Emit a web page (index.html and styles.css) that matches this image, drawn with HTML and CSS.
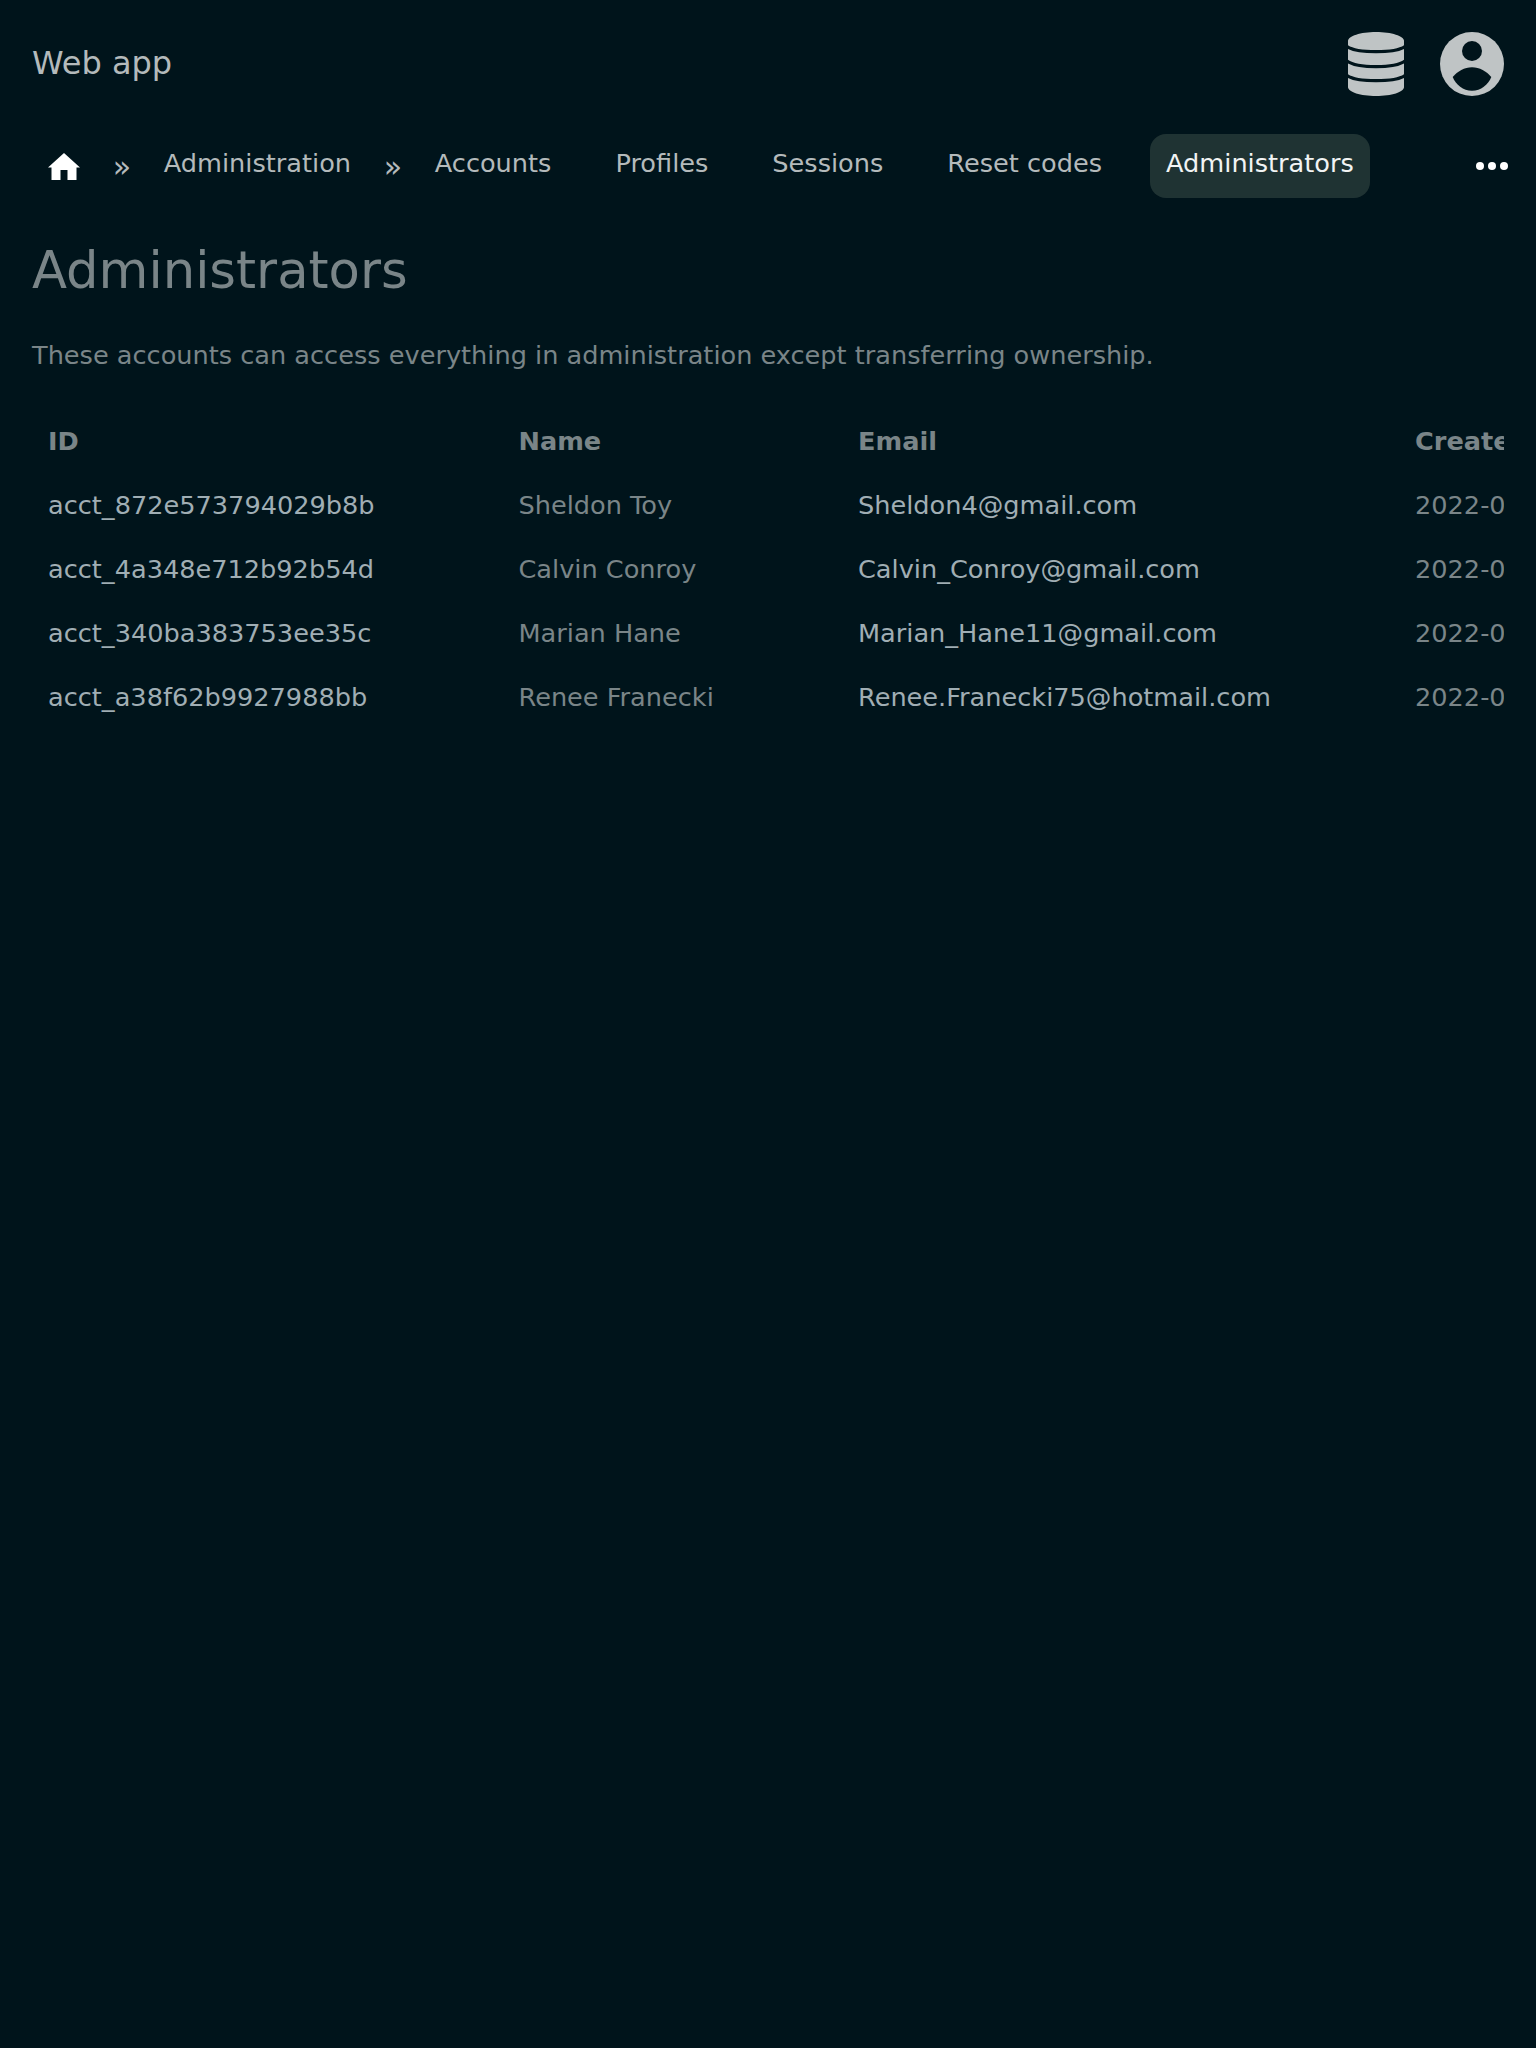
FILE: index.html
```html
<!DOCTYPE html>
<html lang="en">
<head>
  <meta charset="UTF-8" />
  <meta name="viewport" content="width=device-width, initial-scale=1.0" />
  <title>Administrators</title>
  <link rel="stylesheet" href="styles.css">
</head>
<body>
  <header class="topbar">
    <a class="brand" href="#">Web app</a>
    <div class="topbar-icons">
      <svg class="icon-db" viewBox="0 0 56 64" width="56" height="64" aria-hidden="true">
        <path d="M0 9C0 4 12.500 0 28 0s28 4 28 9v46c0 5-12.500 9-28 9S0 60 0 55z"/>
        <path class="db-line" d="M-1 14.500C4 18 16 19.700 28 19.700S52 18 57 14.500"/>
        <path class="db-line" d="M-1 29C4 32.800 16 34.700 28 34.700S52 32.800 57 29"/>
        <path class="db-line" d="M-1 43.500C4 47 16 48.700 28 48.700S52 47 57 43.500"/>
      </svg>
      <svg class="icon-user" viewBox="0 0 64 64" width="64" height="64" aria-hidden="true">
        <circle cx="32" cy="32" r="32"/>
        <circle class="user-cut" cx="32" cy="19" r="10"/>
        <path class="user-cut" d="M12.700 45C17.500 39.500 24.500 35.300 32 35.300S46.500 39.500 51.300 45C48 53 41 58.700 32 58.700S16 53 12.700 45z"/>
      </svg>
    </div>
  </header>

  <nav class="crumbs">
    <a class="crumb-home" href="#" aria-label="Home">
      <svg viewBox="0 0 32 27" width="32" height="27" aria-hidden="true">
        <path d="M16 0 0 14.500h3.500V27h9v-10h7v10h9V14.500H32z"/>
      </svg>
    </a>
    <span class="sep">»</span>
    <a class="crumb" href="#">Administration</a>
    <span class="sep">»</span>
    <div class="crumb-group">
      <a class="crumb" href="#">Accounts</a>
      <a class="crumb" href="#">Profiles</a>
      <a class="crumb" href="#">Sessions</a>
      <a class="crumb" href="#">Reset codes</a>
      <a class="crumb active" href="#">Administrators</a>
    </div>
    <a class="more" href="#" aria-label="More"><i></i><i></i><i></i></a>
  </nav>

  <main class="content">
    <h1>Administrators</h1>
    <p class="lead">These accounts can access everything in administration except transferring ownership.</p>

    <div class="table-wrap">
      <table>
        <thead>
          <tr>
            <th class="col-id">ID</th>
            <th class="col-name">Name</th>
            <th class="col-email">Email</th>
            <th>Created</th>
          </tr>
        </thead>
        <tbody>
          <tr>
            <td class="mono">acct_872e573794029b8b</td>
            <td>Sheldon Toy</td>
            <td class="mail">Sheldon4@gmail.com</td>
            <td>2022-04-12</td>
          </tr>
          <tr>
            <td class="mono">acct_4a348e712b92b54d</td>
            <td>Calvin Conroy</td>
            <td class="mail">Calvin_Conroy@gmail.com</td>
            <td>2022-06-03</td>
          </tr>
          <tr>
            <td class="mono">acct_340ba383753ee35c</td>
            <td>Marian Hane</td>
            <td class="mail">Marian_Hane11@gmail.com</td>
            <td>2022-08-21</td>
          </tr>
          <tr>
            <td class="mono">acct_a38f62b9927988bb</td>
            <td>Renee Franecki</td>
            <td class="mail">Renee.Franecki75@hotmail.com</td>
            <td>2022-09-17</td>
          </tr>
        </tbody>
      </table>
    </div>
  </main>
</body>
</html>
```

FILE: styles.css
```css
html {
  background-color: #00141b;
}
body {
  margin: 0;
  padding: 32px;
  min-height: 1984px;
  font-family: 'DejaVu Sans', sans-serif;
  font-size: 25.6px;
  color: #b4babb;
  background-color: #00141b;
}
a {
  color: inherit;
  text-decoration: none;
}

.topbar {
  display: flex;
  align-items: center;
  justify-content: space-between;
  height: 64px;
}
.brand {
  font-size: 32px;
  padding-bottom: 2px;
}
.topbar-icons {
  display: flex;
  gap: 36px;
}
.topbar-icons svg {
  display: block;
  fill: #bfc4c5;
  overflow: hidden;
}
.db-line {
  fill: none;
  stroke: #00141b;
  stroke-width: 3.2;
}
.topbar-icons .user-cut {
  fill: #00141b;
}

.crumbs {
  display: flex;
  align-items: center;
  height: 64px;
  margin-top: 38px;
}
.crumb-group {
  display: flex;
  gap: 32px;
}
.crumb {
  display: flex;
  align-items: center;
  box-sizing: border-box;
  height: 64px;
  padding: 0 16px 6px;
  border-radius: 16px;
}
.crumb.active {
  background-color: #1f3333;
  color: #f2f4f4;
}
.crumb-home {
  padding: 0 16px;
}
.crumb-home svg {
  display: block;
  fill: #ffffff;
}
.sep {
  margin: 0 16.700px;
  font-size: 30px;
}
.more {
  display: flex;
  gap: 4px;
  margin-left: auto;
  margin-right: -4px;
}
.more i {
  width: 8px;
  height: 8px;
  border-radius: 50%;
  background-color: #ffffff;
}

h1 {
  margin: 42px 0 0;
  font-size: 51.2px;
  font-weight: 400;
  line-height: 1.2;
  color: #7a8588;
}
.lead {
  margin: 35px 0 0;
  color: #7a8588;
  line-height: 1.5;
}

.table-wrap {
  margin-top: 34px;
  overflow: hidden;
}
table {
  border-collapse: collapse;
  table-layout: fixed;
  width: 1700px;
}
th, td {
  padding: 16px;
  height: 64px;
  box-sizing: border-box;
  text-align: left;
  white-space: nowrap;
  color: #7a8588;
}
th {
  font-weight: 700;
}
.col-id {
  width: 470.500px;
}
.col-name {
  width: 339.500px;
}
.col-email {
  width: 557px;
}
td.mono,
td.mail {
  color: #a0aeb4;
}
```
